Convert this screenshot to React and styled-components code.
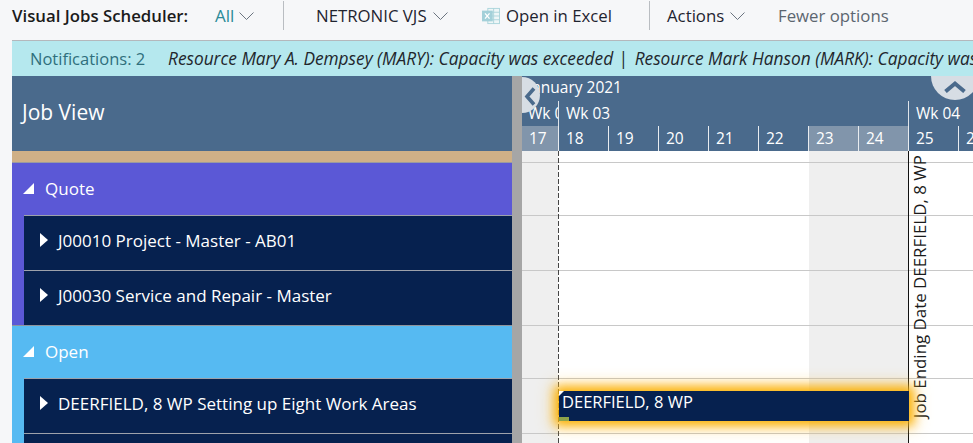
import React from "react";
import styled, { createGlobalStyle } from "styled-components";

const font = `"Open Sans", "Noto Sans", "Liberation Sans", sans-serif`;

const GlobalStyle = createGlobalStyle`
  html, body {
    margin: 0;
    padding: 0;
    height: 443px;
    overflow: hidden;
    background: #f6f7f9;
    font-family: ${font};
  }
`;

const DAYS = [
  { n: 18 }, { n: 19 }, { n: 20 }, { n: 21 }, { n: 22 },
  { n: 23, off: true }, { n: 24, off: true },
];

const GROUPS = [
  {
    name: "Quote",
    color: "#5b58d6",
    jobs: ["J00010 Project - Master - AB01", "J00030 Service and Repair - Master"],
  },
  {
    name: "Open",
    color: "#56baf2",
    jobs: ["DEERFIELD, 8 WP Setting up Eight Work Areas", ""],
  },
];

function Chevron() {
  return (
    <svg width="15" height="8" viewBox="0 0 15 8" fill="none" stroke="#6b7480" strokeWidth="1">
      <path d="M.5.5 7.5 7.5 14.5.5" />
    </svg>
  );
}

function ExcelIcon() {
  return (
    <svg width="20" height="18" viewBox="0 0 20 18">
      <rect x="6.5" y=".5" width="13" height="17" fill="#eef6f7" stroke="#a9d3da" />
      <path d="M6.5 4.8h13M6.5 9h13M6.5 13.2h13M13 .5v17" stroke="#a9d3da" fill="none" />
      <rect x="0" y="3" width="12" height="12" fill="#a3d0d9" />
      <path d="M3.4 6l5 6M8.4 6l-5 6" stroke="#fff" strokeWidth="1.5" fill="none" />
    </svg>
  );
}

export default function App() {
  return (
    <Page>
      <GlobalStyle />
      <Toolbar>
        <PageTitle>Visual Jobs Scheduler:</PageTitle>
        <FilterBtn>
          All <Chevron />
        </FilterBtn>
        <Divider />
        <ToolBtn $width={166} $left={32}>
          NETRONIC VJS <Chevron />
        </ToolBtn>
        <ToolBtn $width={130} $left={0}>
          <ExcelIcon /> Open in Excel
        </ToolBtn>
        <Divider $left={37} />
        <ToolBtn $width={111} $left={17}>
          Actions <Chevron />
        </ToolBtn>
        <MutedBtn>Fewer options</MutedBtn>
      </Toolbar>

      <Notice>
        <NoticeCount>Notifications: 2</NoticeCount>
        <NoticeText>
          Resource Mary A. Dempsey (MARY): Capacity was exceeded
          <NoticeSep>|</NoticeSep>
          Resource Mark Hanson (MARK): Capacity was exceeded
        </NoticeText>
      </Notice>

      <Main>
        <JobPanel>
          <PanelHeader>Job View</PanelHeader>
          <TanStrip />
          {GROUPS.map((g) => (
            <Group key={g.name} $color={g.color}>
              <GroupHead>
                <CollapseArrow />
                {g.name}
              </GroupHead>
              {g.jobs.map((job, i) => (
                <JobRow key={i}>
                  {job && <ExpandArrow />}
                  {job}
                </JobRow>
              ))}
            </Group>
          ))}
        </JobPanel>

        <Splitter />

        <Timeline>
          <TimeHeader>
            <MonthRow>January 2021</MonthRow>
            <WeekRow>
              <WeekCell $w={37}>Wk 02</WeekCell>
              <WeekCell $w={350}>Wk 03</WeekCell>
              <WeekCell $w={64}>Wk 04</WeekCell>
            </WeekRow>
            <DayRow>
              <DayCell $w={37} $off>17</DayCell>
              {DAYS.map((d) => (
                <DayCell key={d.n} $w={50} $off={d.off}>{d.n}</DayCell>
              ))}
              <DayCell $w={50}>25</DayCell>
              <DayCell $w={50}>26</DayCell>
            </DayRow>
            <ScrollLeft>
              <svg width="12" height="19" viewBox="0 0 12 19" fill="none" stroke="#4a6a8c" strokeWidth="3.6">
                <path d="M10 1.5 3 9.5l7 8" />
              </svg>
            </ScrollLeft>
            <ScrollUp>
              <svg width="22" height="13" viewBox="0 0 22 13" fill="none" stroke="#4a6a8c" strokeWidth="4">
                <path d="M1.5 11.5 11 3.5l9.5 8" />
              </svg>
            </ScrollUp>
          </TimeHeader>

          <Chart>
            <ChartRow $h={12} />
            <ChartRow $h={53} />
            <ChartRow $h={55} />
            <ChartRow $h={55} />
            <ChartRow $h={53} />
            <ChartRow $h={55} />
            <TodayLine />
            <EndLine />
            <EndLabel>Job Ending Date DEERFIELD, 8 WP</EndLabel>
            <JobBar>
              <BarCorner />
              DEERFIELD, 8 WP
              <BarProgress />
            </JobBar>
          </Chart>
        </Timeline>
      </Main>
    </Page>
  );
}

const Page = styled.div`
  width: 973px;
  height: 443px;
  overflow: hidden;
  display: flex;
  flex-direction: column;
`;

const Toolbar = styled.div`
  height: 40px;
  flex: none;
  box-sizing: border-box;
  margin-left: 12px;
  padding-bottom: 9px;
  display: flex;
  align-items: center;
  font-size: 16.8px;
  color: #1f2430;
  white-space: nowrap;
`;

const PageTitle = styled.div`
  font-weight: 600;
  font-size: 16.8px;
  color: #1b1b1b;
  width: 203px;
`;

const FilterBtn = styled.div`
  display: flex;
  align-items: center;
  gap: 5px;
  color: #2b8b98;
  font-size: 17px;
  width: 68px;
`;

const Divider = styled.div`
  width: 1px;
  height: 29px;
  background: #b9bdc2;
  margin-left: ${(p) => p.$left || 0}px;
`;

const ToolBtn = styled.div`
  display: flex;
  align-items: center;
  gap: 6px;
  width: ${(p) => p.$width}px;
  margin-left: ${(p) => p.$left}px;
`;

const MutedBtn = styled.div`
  color: #5c6670;
`;

const Notice = styled.div`
  height: 36px;
  flex: none;
  margin-left: 12px;
  box-sizing: border-box;
  border-top: 1px solid #b4b8bc;
  background: #b5e8ee;
  display: flex;
  align-items: center;
  padding-left: 18px;
  font-size: 16.5px;
  white-space: nowrap;
  overflow: hidden;
`;

const NoticeCount = styled.span`
  color: #2f6f7c;
  width: 138px;
  flex: none;
`;

const NoticeText = styled.span`
  font-style: italic;
  font-size: 17.3px;
  color: #22262c;
`;

const NoticeSep = styled.span`
  margin: 0 7px 0 5px;
`;

const Main = styled.div`
  flex: 1;
  margin-left: 12px;
  display: flex;
  min-height: 0;
`;

const JobPanel = styled.div`
  width: 500px;
  flex: none;
`;

const PanelHeader = styled.div`
  height: 75px;
  background: #4a6a8c;
  color: #fff;
  font-size: 21px;
  display: flex;
  align-items: center;
  padding: 0 0 4px 10px;
  box-sizing: border-box;
`;

const TanStrip = styled.div`
  height: 12px;
  box-sizing: border-box;
  background: #cfb087;
  border-bottom: 1px solid #9a9aa0;
`;

const Group = styled.div`
  background: ${(p) => p.$color};
  border-bottom: 1px solid #8f949c;
`;

const GroupHead = styled.div`
  height: 52px;
  box-sizing: border-box;
  padding: 0 0 2px 11px;
  display: flex;
  align-items: center;
  color: #fff;
  font-size: 17px;
`;

const CollapseArrow = styled.span`
  width: 0;
  height: 0;
  border-left: 11px solid transparent;
  border-bottom: 11px solid #fff;
  margin-right: 11px;
`;

const JobRow = styled.div`
  height: 55px;
  box-sizing: border-box;
  margin-left: 12px;
  border-top: 1px solid #9da2ab;
  background: #06214f;
  color: #fff;
  font-size: 17px;
  display: flex;
  align-items: center;
  padding: 0 0 6px 16px;
`;

const ExpandArrow = styled.span`
  width: 0;
  height: 0;
  border-top: 7px solid transparent;
  border-bottom: 7px solid transparent;
  border-left: 8px solid #fff;
  margin-right: 10px;
`;

const Splitter = styled.div`
  width: 10px;
  flex: none;
  background: #a6a6a6;
`;

const Timeline = styled.div`
  flex: 1;
  min-width: 0;
  display: flex;
  flex-direction: column;
`;

const TimeHeader = styled.div`
  position: relative;
  height: 75px;
  flex: none;
  background: #4a6a8c;
  color: #fff;
  font-size: 15.5px;
  overflow: hidden;
`;

const MonthRow = styled.div`
  height: 25px;
  line-height: 23px;
  padding-left: 6px;
`;

const WeekRow = styled.div`
  height: 25px;
  display: flex;
`;

const WeekCell = styled.div`
  flex: none;
  width: ${(p) => p.$w}px;
  box-sizing: border-box;
  padding-left: ${(p) => (p.$w === 37 ? 6 : 7)}px;
  border-right: 1px solid #dfe4ea;
  line-height: 24px;
  white-space: nowrap;
  overflow: hidden;
  &:last-child { border-right: 0; }
`;

const DayRow = styled.div`
  height: 25px;
  display: flex;
`;

const DayCell = styled.div`
  flex: none;
  width: ${(p) => p.$w}px;
  box-sizing: border-box;
  border-right: 1px solid #e8ecf0;
  background: ${(p) => (p.$off ? "#8195ab" : "transparent")};
  padding-left: 7px;
  line-height: 25px;
`;

const ScrollLeft = styled.div`
  position: absolute;
  left: -18px;
  top: 1px;
  width: 36px;
  height: 36px;
  border-radius: 50%;
  background: #d7dde4;
  display: flex;
  align-items: center;
  justify-content: flex-end;
  padding: 2px 4px 0 0;
  box-sizing: border-box;
`;

const ScrollUp = styled.div`
  position: absolute;
  left: 409px;
  top: -24px;
  width: 48px;
  height: 48px;
  border-radius: 50%;
  background: #d7dde4;
  display: flex;
  align-items: flex-end;
  justify-content: center;
  padding-bottom: 7px;
  box-sizing: border-box;
`;

const Chart = styled.div`
  position: relative;
  flex: 1;
  overflow: hidden;
  background: linear-gradient(
    to right,
    #efefef 36px,
    #fff 36px 287px,
    #efefef 287px 387px,
    #fff 387px
  );
`;

const ChartRow = styled.div`
  height: ${(p) => p.$h}px;
  box-sizing: border-box;
  border-bottom: 1px solid #c8c8c8;
`;

const TodayLine = styled.div`
  position: absolute;
  left: 36px;
  top: 0;
  bottom: 0;
  width: 1px;
  background: repeating-linear-gradient(to bottom, #444 0 5px, transparent 5px 7px);
`;

const EndLine = styled.div`
  position: absolute;
  left: 386px;
  top: 0;
  bottom: 0;
  border-left: 1px solid #111;
`;

const EndLabel = styled.div`
  position: absolute;
  left: 389px;
  top: 4px;
  writing-mode: vertical-rl;
  transform: rotate(180deg);
  font-size: 16.9px;
  line-height: 18px;
  color: #1b1b1b;
  white-space: nowrap;
`;

const JobBar = styled.div`
  position: absolute;
  left: 37px;
  top: 240px;
  width: 350px;
  height: 30px;
  box-sizing: border-box;
  background: #06214f;
  color: #fff;
  font-size: 16.5px;
  line-height: 22px;
  padding-left: 3px;
  box-shadow: 0 0 10px 4px #fbb000, 0 0 16px 7px rgba(252, 196, 70, 0.45);
`;

const BarCorner = styled.span`
  position: absolute;
  left: 0;
  top: 0;
  border-top: 5px solid #fff;
  border-right: 5px solid transparent;
`;

const BarProgress = styled.span`
  position: absolute;
  left: 0;
  bottom: 0;
  width: 10px;
  height: 4px;
  background: #8ea34a;
`;
